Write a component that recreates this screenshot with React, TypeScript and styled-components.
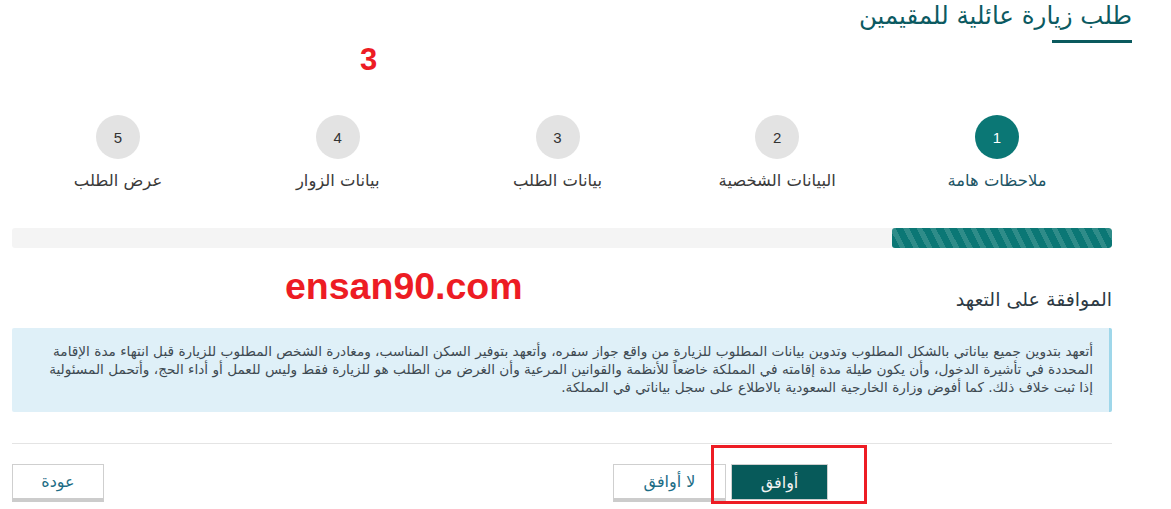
import React from 'react'
import styled, { createGlobalStyle } from 'styled-components'

const GlobalStyle = createGlobalStyle`
  html, body {
    margin: 0;
    padding: 0;
    background: #fff;
  }
  body {
    font-family: "DejaVu Sans", "Noto Sans", sans-serif;
  }
`

const Page = styled.div`
  position: relative;
  width: 1171px;
  height: 509px;
  overflow: hidden;
  box-sizing: border-box;
  padding: 0 59px 0 12px;
`

const Header = styled.div`
  display: flex;
  justify-content: flex-start;
  margin-right: -20px;
  height: 44px;
`

const Title = styled.h1`
  margin: 0;
  font-size: 24.5px;
  font-weight: 400;
  color: #0b5a61;
  line-height: 32px;
  position: relative;
  &::after {
    content: '';
    position: absolute;
    right: 0;
    top: 40px;
    width: 80px;
    height: 3px;
    background: #0b5a5e;
  }
`

const Steps = styled.div`
  display: flex;
  justify-content: space-between;
  padding: 71px 40px 0 31px;
`

const Step = styled.div`
  width: 150px;
  display: flex;
  flex-direction: column;
  align-items: center;
`

const Circle = styled.div<{ $active?: boolean }>`
  width: 44px;
  height: 44px;
  border-radius: 50%;
  background: ${({ $active }) => ($active ? '#0b7775' : '#e3e3e3')};
  color: ${({ $active }) => ($active ? '#fff' : '#333')};
  font-family: "Liberation Sans", Arial, sans-serif;
  font-size: 15px;
  display: flex;
  align-items: center;
  justify-content: center;
`

const StepLabel = styled.div<{ $active?: boolean }>`
  margin-top: 12px;
  font-size: 16.4px;
  line-height: 20px;
  color: ${({ $active }) => ($active ? '#1d5565' : '#3a3a3a')};
  white-space: nowrap;
`

const Track = styled.div`
  margin-top: 37px;
  height: 20px;
  background: #f4f4f4;
  border-radius: 3px;
  overflow: hidden;
  display: flex;
`

const Fill = styled.div`
  height: 100%;
  background-color: #0b7775;
  background-image: repeating-linear-gradient(
    63deg,
    #0b7775 0,
    #0b7775 7px,
    #2f8c89 7px,
    #2f8c89 12px
  );
  border-radius: 3px;
`

const SectionTitle = styled.h2`
  margin: 38px 0 0;
  font-size: 19px;
  font-weight: 400;
  color: #2d3a44;
  line-height: 26px;
`

const Notice = styled.div`
  margin-top: 16px;
  background: #dff0f8;
  border-right: 3px solid #9fd7ea;
  border-radius: 2px;
  padding: 14px 16px 0 16px;
  font-size: 13.65px;
  line-height: 18px;
  color: #3e4a52;
  height: 84px;
  box-sizing: border-box;
  white-space: nowrap;
`

const Divider = styled.hr`
  margin: 31px 0 0;
  border: 0;
  border-top: 1px solid #e4e4e4;
`

const Actions = styled.div`
  margin-top: 20px;
  display: flex;
  align-items: flex-start;
`

const Choice = styled.div`
  display: flex;
  gap: 5px;
  margin-right: 284px;
  position: relative;
`

const Button = styled.button<{ $primary?: boolean; $w: number }>`
  width: ${({ $w }) => $w}px;
  height: ${({ $primary }) => ($primary ? 36 : 38)}px;
  box-sizing: border-box;
  border: 1px solid #cfcfcf;
  border-bottom: ${({ $primary }) => ($primary ? '1px solid #cfcfcf' : '4px solid #cccccc')};
  background: ${({ $primary }) => ($primary ? '#075a5a' : '#fff')};
  color: ${({ $primary }) => ($primary ? '#f2f2f2' : '#1d6d86')};
  font-family: "DejaVu Sans", sans-serif;
  font-size: 16px;
  padding: 0;
  cursor: pointer;
`

const Back = styled(Button)`
  margin-right: auto;
`

const Highlight = styled.div`
  position: absolute;
  right: -39px;
  top: -19px;
  width: 156px;
  height: 59px;
  box-sizing: border-box;
  border: 3px solid #ed1c24;
  pointer-events: none;
`

const Watermark = styled.div<{ $size: number }>`
  position: absolute;
  font-family: "Liberation Sans", Arial, sans-serif;
  font-weight: 700;
  color: #ed1c24;
  font-size: ${({ $size }) => $size}px;
  line-height: 1;
  direction: ltr;
`

const steps = ['ملاحظات هامة', 'البيانات الشخصية', 'بيانات الطلب', 'بيانات الزوار', 'عرض الطلب']

export default function App() {
  return (
    <>
      <GlobalStyle />
      <Page dir="rtl">
        <Header>
          <Title>طلب زيارة عائلية للمقيمين</Title>
        </Header>
        <Steps>
          {steps.map((s, i) => (
            <Step key={s}>
              <Circle $active={i === 0}>{i + 1}</Circle>
              <StepLabel $active={i === 0}>{s}</StepLabel>
            </Step>
          ))}
        </Steps>
        <Track>
          <Fill style={{ width: '20%' }} />
        </Track>
        <SectionTitle>الموافقة على التعهد</SectionTitle>
        <Notice>
          أتعهد بتدوين جميع بياناتي بالشكل المطلوب وتدوين بيانات المطلوب للزيارة من واقع جواز سفره، وأتعهد بتوفير السكن المناسب، ومغادرة الشخص المطلوب للزيارة قبل انتهاء مدة الإقامة
          <br />
          المحددة في تأشيرة الدخول، وأن يكون طيلة مدة إقامته في المملكة خاضعاً للأنظمة والقوانين المرعية وأن الغرض من الطلب هو للزيارة فقط وليس للعمل أو أداء الحج، وأتحمل المسئولية
          <br />
          إذا ثبت خلاف ذلك. كما أفوض وزارة الخارجية السعودية بالاطلاع على سجل بياناتي في المملكة.
        </Notice>
        <Divider />
        <Actions>
          <Choice>
            <Button $primary $w={97}>أوافق</Button>
            <Button $w={113}>لا أوافق</Button>
            <Highlight />
          </Choice>
          <Back $w={92}>عودة</Back>
        </Actions>
        <Watermark $size={31} style={{ left: 360, top: 44 }}>3</Watermark>
        <Watermark $size={37.5} style={{ left: 285, top: 268 }}>ensan90.com</Watermark>
      </Page>
    </>
  )
}
